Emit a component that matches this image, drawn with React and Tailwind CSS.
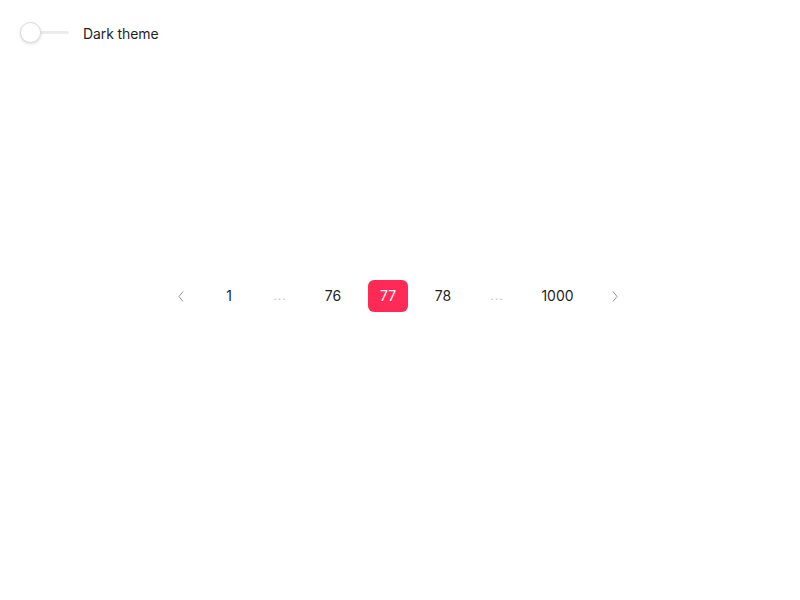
import React, { useState } from 'react';

const pages = [
    { label: '1', w: 'w-[36px]' },
    { label: '...', muted: true, w: 'w-[36px]' },
    { label: '76', w: 'w-[40px]' },
    { label: '77', active: true, w: 'w-[40px]' },
    { label: '78', w: 'w-[40px]' },
    { label: '...', muted: true, w: 'w-[38px]' },
    { label: '1000', w: 'w-[53px]' },
];

const Chevron = ({ dir }) => (
    <svg width="6" height="11" viewBox="0 0 6 11" fill="none" stroke="#8a8a8a" strokeWidth="0.9">
        {dir === 'left' ? <path d="M5 0.5 L1 5.5 L5 10.5" /> : <path d="M1 0.5 L5 5.5 L1 10.5" />}
    </svg>
);

const Toggle = ({ on, onChange }) => (
    <button onClick={() => onChange(!on)} className="relative w-[49px] h-[21px] shrink-0">
        <span className="absolute left-0 right-0 top-[9px] h-[3px] rounded-full bg-[#ececec]" />
        <span
            className={`absolute top-0 w-[21px] h-[21px] rounded-full bg-white border border-[#dcdcdc] shadow-[0_1px_3px_rgba(0,0,0,0.15)] ${on ? 'left-[28px]' : 'left-0'}`}
        />
    </button>
);

const App = () => {
    const [dark, setDark] = useState(false);

    return (
        <div className="h-screen flex flex-col bg-white font-['Inter',sans-serif] text-[#1f1f1f]">
            <div className="h-[64px] shrink-0 flex items-start pt-[22px] pl-5">
                <Toggle on={dark} onChange={setDark} />
                <span className="ml-[14px] mt-[2px] text-sm leading-5 tracking-[-0.1px]">Dark theme</span>
            </div>

            <div className="flex-1 flex items-center justify-center pb-[72px] pr-1">
                <nav className="flex items-center gap-[15px] text-sm">
                    <button className="h-8 w-[31px] flex items-center justify-center">
                        <Chevron dir="left" />
                    </button>
                    {pages.map((p, i) => (
                        <button
                            key={i}
                            className={`h-8 ${p.w} flex items-center justify-center rounded-md ${p.active ? 'bg-[#ff2a55] text-white' : p.muted ? 'text-[#c4c4c4] text-xs tracking-[1px]' : 'text-[#1f1f1f]'}`}
                        >
                            {p.label}
                        </button>
                    ))}
                    <button className="h-8 w-[32px] flex items-center justify-center">
                        <Chevron dir="right" />
                    </button>
                </nav>
            </div>
        </div>
    );
};

export default App;
